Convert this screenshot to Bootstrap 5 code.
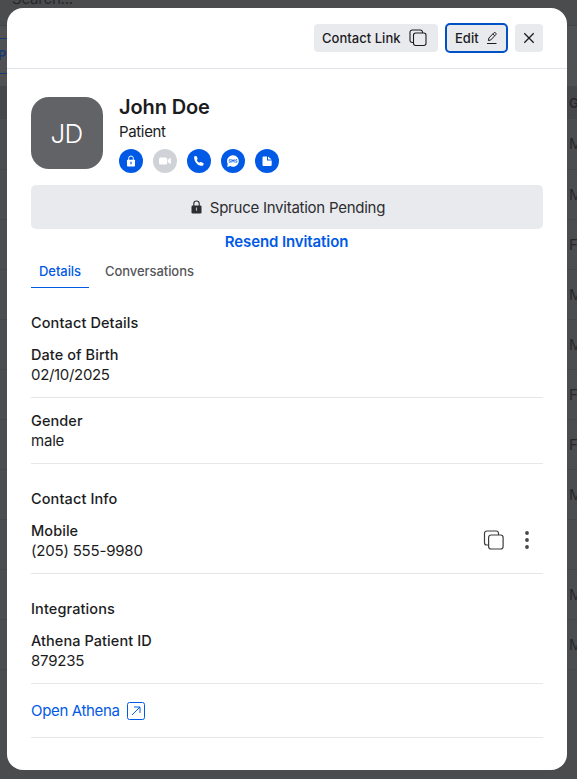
<!DOCTYPE html>
<html lang="en">
<head>
<meta charset="utf-8">
<meta name="viewport" content="width=device-width, initial-scale=1">
<title>John Doe</title>
<link href="https://cdn.jsdelivr.net/npm/bootstrap@5.3.0/dist/css/bootstrap.min.css" rel="stylesheet">
<style>
  body { font-family: Inter, "Liberation Sans", sans-serif; font-size: 15px; line-height: 20px; letter-spacing: -.2px; color: #1b1c1e; background: #4b4c4e; height: 779px; overflow: hidden; }
  svg { display: block; flex: none; }
  .behind { position: absolute; inset: 0; overflow: hidden; color: #27282a; }
  .search-bar { height: 18px; padding-left: 12px; line-height: 20px; background: #4b4c4e; }
  .search-bar span { margin-top: -11px; }
  .toolbar { height: 69px; padding-top: 12px; border-top: 1px solid #444548; margin-top: 7px; background: #505153; }
  .page-btn { width: 60px; height: 36px; margin-left: -10px; padding-left: 7px; line-height: 33px; font-weight: 600; font-size: 13px; border: 1px solid #173a77; color: #173a77; }
  .table-head { height: 33px; margin-top: -8px; background: #464749; font-weight: 600; font-size: 13px; }
  .line { height: 50px; border-bottom: 1px solid #454648; background: #4c4d4f; }
  .table-head + .line { height: 51px; }
  .cell { width: 8px; }
  .dialog { position: absolute; left: 7px; top: 8px; width: 560px; height: 762px; border-radius: 16px; background: #fff; overflow: hidden; }
  .dialog-top { height: 61px; padding: 0 24px; border-bottom: 1px solid #e3e4ea; }
  .btn-soft { --bs-btn-bg: #e9eaee; --bs-btn-color: #1b1c1e; --bs-btn-hover-bg: #dddfe4; height: 28px; border: 0; border-radius: 4px; font-size: 13px; font-weight: 500; letter-spacing: .03px; padding: 0 8px; line-height: 28px; }
  .btn-link-copy { width: 124px; }
  .btn-ring { width: 61px; padding-left: 9px; outline: 2px solid #0052c4; outline-offset: -1px; }
  .dialog-main { padding: 28px 24px 0; }
  .person { height: 72px; }
  .avatar { width: 72px; height: 72px; border-radius: 18px; background: #626367; color: #fff; font-size: 26px; font-weight: 300; letter-spacing: -.6px; padding-right: 1px; padding-top: 1px; }
  .name { font-size: 20px; line-height: 24px; font-weight: 600; letter-spacing: -.12px; margin-bottom: 3px; margin-top: -2px; }
  .role { letter-spacing: -.35px; }
  .dots { margin-top: 7px; column-gap: 10px; }
  .dot { width: 24px; height: 24px; border-radius: 50%; background: #005ae6; color: #fff; }
  .dot-off { background: #cfd2d7; }
  .pending { height: 44px; margin-top: 16px; padding: 2px 0 0 2px; border-radius: 5px; background: #e9eaee; color: #2c2d30; letter-spacing: -.25px; }
  .pending svg { margin-bottom: 2px; }
  .blue { color: #005ae6; }
  .resend { font-weight: 600; margin-top: 3px; padding-right: 1px; letter-spacing: -.1px; }
  .tabs { margin-top: 1px; gap: 8px; font-size: 13px; font-weight: 500; letter-spacing: -.06px; }
  .tabs .nav-link { padding: 8px 8px 0; height: 35px; line-height: 20px; color: #55565a; }
  .tabs .nav-link.active { width: 58px; color: #005ae6; border-bottom: 1px solid #005ae6; }
  .block-title { font-size: 14.5px; font-weight: 500; line-height: 20px; letter-spacing: .11px; margin: 25px 0 2px; }
  .item { height: 66px; padding-top: 13px; border-bottom: 1px solid #e6e7ea; }
  .block-title + .item { height: 63px; padding-top: 10px; }
  .open-row { height: 54px; padding-top: 17px; letter-spacing: -.34px; }
  .open-row a { column-gap: 7px; }
  .item-label { font-size: 14.5px; font-weight: 500; letter-spacing: .07px; }
  .digits { letter-spacing: -.32px; }
</style>
<script src="https://cdn.jsdelivr.net/npm/bootstrap@5.3.0/dist/js/bootstrap.bundle.min.js"></script>
</head>
<body>
<div class="behind" aria-hidden="true">
  <div class="search-bar d-flex"><span>Search...</span></div>
  <div class="toolbar"><div class="page-btn">Pa</div></div>
  <div class="table-head d-flex justify-content-end align-items-center"><span class="cell">G</span></div>
  <div class="line d-flex justify-content-end align-items-center"><span class="cell">M</span></div>
  <div class="line d-flex justify-content-end align-items-center"><span class="cell">M</span></div>
  <div class="line d-flex justify-content-end align-items-center"><span class="cell">F</span></div>
  <div class="line d-flex justify-content-end align-items-center"><span class="cell">M</span></div>
  <div class="line d-flex justify-content-end align-items-center"><span class="cell">M</span></div>
  <div class="line d-flex justify-content-end align-items-center"><span class="cell">F</span></div>
  <div class="line d-flex justify-content-end align-items-center"><span class="cell">F</span></div>
  <div class="line d-flex justify-content-end align-items-center"><span class="cell">M</span></div>
  <div class="line"></div>
  <div class="line d-flex justify-content-end align-items-center"><span class="cell">M</span></div>
  <div class="line d-flex justify-content-end align-items-center"><span class="cell">M</span></div>
</div>

<div class="dialog" role="dialog" aria-label="John Doe">
  <div class="dialog-top d-flex justify-content-end align-items-center gap-2">
    <button class="btn btn-soft btn-link-copy d-flex align-items-center justify-content-between">Contact Link
      <svg width="22" height="20" viewBox="0 0 22 20" fill="none" stroke="currentColor" stroke-width="1.1"><path d="M5.500 14.500H4.200A2.200 2.200 0 0 1 2 12.300V4.200A2.200 2.200 0 0 1 4.200 2h8.100a2.200 2.200 0 0 1 2.200 2.200v.8"/><rect x="5.500" y="5" width="12.500" height="12.500" rx="2.200"/></svg>
    </button>
    <button class="btn btn-soft btn-ring d-flex align-items-center justify-content-between">Edit
      <svg width="13" height="14" viewBox="0 0 13 14" fill="none" stroke="currentColor"><path d="M2.400 9.600l.5-2.600L8 1.700c.9-.9 2.700.8 1.900 1.800L4.900 8.900zM6.900 3l1.800 1.700M1 12.500h9.500"/></svg>
    </button>
    <button class="btn btn-soft d-flex align-items-center" aria-label="Close">
      <svg width="12" height="12" viewBox="0 0 12 12" fill="none" stroke="currentColor" stroke-width="1.300"><path d="M1.300 1.300l9.400 9.400M10.700 1.300l-9.400 9.400"/></svg>
    </button>
  </div>

  <div class="dialog-main">
    <div class="person d-flex gap-3">
      <div class="avatar d-flex align-items-center justify-content-center">JD</div>
      <div>
        <h1 class="name">John Doe</h1>
        <div class="role">Patient</div>
        <div class="dots d-flex">
          <span class="dot d-flex align-items-center justify-content-center"><svg width="12" height="12" viewBox="0 0 12 12"><path d="M3.700 5V3.300a2.300 2.300 0 0 1 4.600 0V5" fill="none" stroke="currentColor"/><rect x="2" y="4.800" width="8" height="6.700" rx=".8" fill="currentColor"/><path d="M6 6.800v2.500" stroke="#005ae6" stroke-width="1.200"/></svg></span>
          <span class="dot dot-off d-flex align-items-center justify-content-center"><svg width="12" height="12" viewBox="0 0 12 12" fill="currentColor"><rect x="0" y="2.500" width="8.200" height="7" rx="1.500"/><path d="M8.800 5l2.400-2q.6-.2.600.500v5q0 .7-.6.500l-2.400-2z"/></svg></span>
          <span class="dot d-flex align-items-center justify-content-center"><svg width="12" height="12" viewBox="0 0 12 12" fill="currentColor"><path d="M1.600 1.200L3 .9q.5 0 .7.5l.9 2q.1.500-.2.800l-.7.700q.9 2 2.500 2.900l.9-.7q.4-.3.800-.1l2.300 1.100q.5.200.4.800l-.4 1.300q-.2.600-.8.600C4.600 10.800 1.200 6.900 1.100 1.900q0-.5.500-.7z"/></svg></span>
          <span class="dot d-flex align-items-center justify-content-center"><svg width="14" height="14" viewBox="0 0 14 14"><path d="M7 1.200a5.800 5.800 0 1 1-2.800 10.900L1.300 13l.4-3.300A5.800 5.800 0 0 1 7 1.200z" fill="currentColor"/><path d="M4.800 5.700Q3 5.300 3 6.300q0 .5.900.700 1 .3.900.9-.2.600-1.900.3M5.800 8.500l.1-3L7 7.400l1.100-1.900.1 3M11.200 5.700q-1.800-.4-1.800.6 0 .5.900.700 1 .3.900.9-.2.600-1.900.3" fill="none" stroke="#005ae6" stroke-width=".8"/></svg></span>
          <span class="dot d-flex align-items-center justify-content-center"><svg width="12" height="12" viewBox="0 0 12 12" fill="currentColor"><path d="M2.600 1.500H6v4h4.700v4.400q0 1.100-1.100 1.100h-7q-1.100 0-1.100-1.100V2.600q0-1.100 1.100-1.100zM7 1.500l3.700 3H7z"/></svg></span>
        </div>
      </div>
    </div>

    <div class="pending d-flex align-items-center justify-content-center gap-2">
      <svg width="11" height="14" viewBox="0 0 11 14"><path d="M2.800 6V3.700a2.700 2.700 0 0 1 5.400 0V6" fill="none" stroke="currentColor" stroke-width="1.100"/><rect x=".5" y="5.500" width="10" height="8" rx="1.200" fill="currentColor"/><path d="M5.500 7.500v3.200" stroke="#b5b6ba" stroke-width="1.200"/></svg>
      <span>Spruce Invitation Pending</span>
    </div>
    <div class="text-center"><a href="#" class="blue resend d-inline-block text-decoration-none">Resend Invitation</a></div>

    <div class="nav tabs">
      <a class="nav-link active" href="#">Details</a>
      <a class="nav-link" href="#">Conversations</a>
    </div>

    <h2 class="block-title">Contact Details</h2>
    <div class="item"><div class="item-label">Date of Birth</div><div class="digits">02/10/2025</div></div>
    <div class="item"><div class="item-label">Gender</div><div>male</div></div>

    <h2 class="block-title">Contact Info</h2>
    <div class="item d-flex justify-content-between">
      <div><div class="item-label">Mobile</div><div>(205) 555-9980</div></div>
      <div class="d-flex align-items-start pt-2 pe-2">
        <svg width="36" height="22" viewBox="0 0 36 22" fill="none" stroke="#3c3d40" stroke-width="1.200"><path d="M5.500 16H3.800A2.300 2.300 0 0 1 1.500 13.700V4.300A2.300 2.300 0 0 1 3.800 2h9.400a2.300 2.300 0 0 1 2.300 2.300V6"/><rect x="5.600" y="6" width="14.500" height="14" rx="2.500"/></svg>
        <svg width="16" height="22" viewBox="0 0 16 22" fill="#46474b"><circle cx="8" cy="4" r="1.900"/><circle cx="8" cy="11" r="1.900"/><circle cx="8" cy="18" r="1.900"/></svg>
      </div>
    </div>

    <h2 class="block-title">Integrations</h2>
    <div class="item"><div class="item-label">Athena Patient ID</div><div>879235</div></div>
    <div class="item open-row"><a href="#" class="blue d-inline-flex align-items-center text-decoration-none">Open Athena
      <svg width="18" height="18" viewBox="0 0 18 18" fill="none" stroke="currentColor"><rect x=".5" y=".5" width="17" height="17" rx="2"/><path d="M5 13l8-8M7 5h6v6"/></svg></a></div>
  </div>
</div>
</body>
</html>
